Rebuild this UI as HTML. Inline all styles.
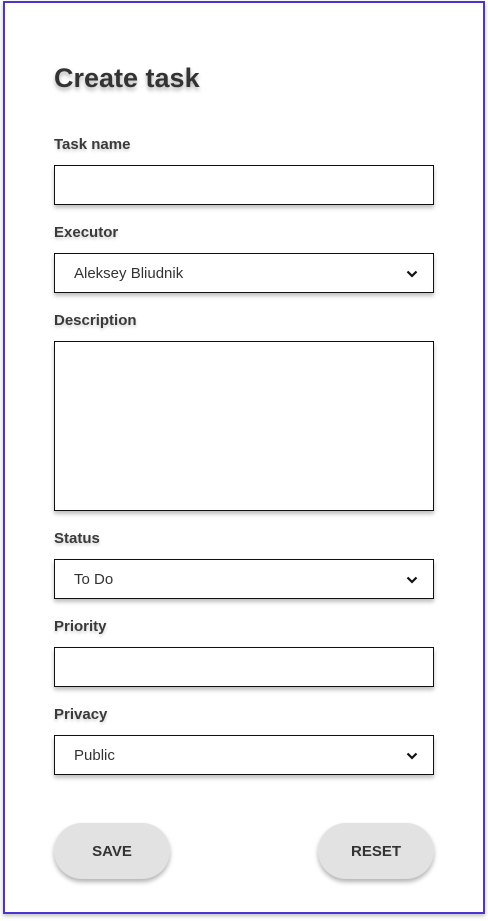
<!DOCTYPE html>
<html><head><style>
*{margin:0;padding:0;box-sizing:border-box}
body{width:488px;height:921px;background:#fff;font-family:"Liberation Sans",sans-serif;position:relative;overflow:hidden}
.frame{position:absolute;left:3px;top:1px;width:482px;height:913px;border:2px solid #4a35d0;box-shadow:0 2px 4px rgba(0,0,0,.25)}
.t{position:absolute;left:54px;top:63px;font-size:27px;font-weight:bold;color:#333;text-shadow:0 3px 4px rgba(0,0,0,.3)}
.l{position:absolute;left:54px;font-size:15px;font-weight:bold;color:#3a3a3a;text-shadow:0 2px 3px rgba(0,0,0,.2)}
.i{position:absolute;left:54px;width:380px;height:40px;border:1.5px solid #111;box-shadow:0 3px 4px rgba(0,0,0,.25);font-size:15px;color:#333;padding-left:19px;line-height:40px;background:#fff}
.i svg{position:absolute;right:15px;top:16px}
.b{position:absolute;top:823px;width:116px;height:56px;border-radius:28px;background:#e2e2e2;box-shadow:0 3px 5px rgba(0,0,0,.3);font-size:15px;font-weight:bold;color:#333;text-align:center;line-height:58px}
</style></head><body>
<div class="frame"></div>
<div class="t">Create task</div>
<div class="l" style="top:136px">Task name</div>
<div class="i" style="top:165px"></div>
<div class="l" style="top:224px">Executor</div>
<div class="i" style="top:253px">Aleksey Bliudnik<svg width="12" height="8" viewBox="0 0 12 8"><path d="M1.5 1.5 6 6 10.5 1.5" fill="none" stroke="#111" stroke-width="2.2"/></svg></div>
<div class="l" style="top:312px">Description</div>
<div class="i" style="top:341px;height:170px"></div>
<div class="l" style="top:530px">Status</div>
<div class="i" style="top:559px">To Do<svg width="12" height="8" viewBox="0 0 12 8"><path d="M1.5 1.5 6 6 10.5 1.5" fill="none" stroke="#111" stroke-width="2.2"/></svg></div>
<div class="l" style="top:618px">Priority</div>
<div class="i" style="top:647px"></div>
<div class="l" style="top:706px">Privacy</div>
<div class="i" style="top:735px">Public<svg width="12" height="8" viewBox="0 0 12 8"><path d="M1.5 1.5 6 6 10.5 1.5" fill="none" stroke="#111" stroke-width="2.2"/></svg></div>
<div class="b" style="left:54px">SAVE</div>
<div class="b" style="left:318px">RESET</div>
</body></html>
